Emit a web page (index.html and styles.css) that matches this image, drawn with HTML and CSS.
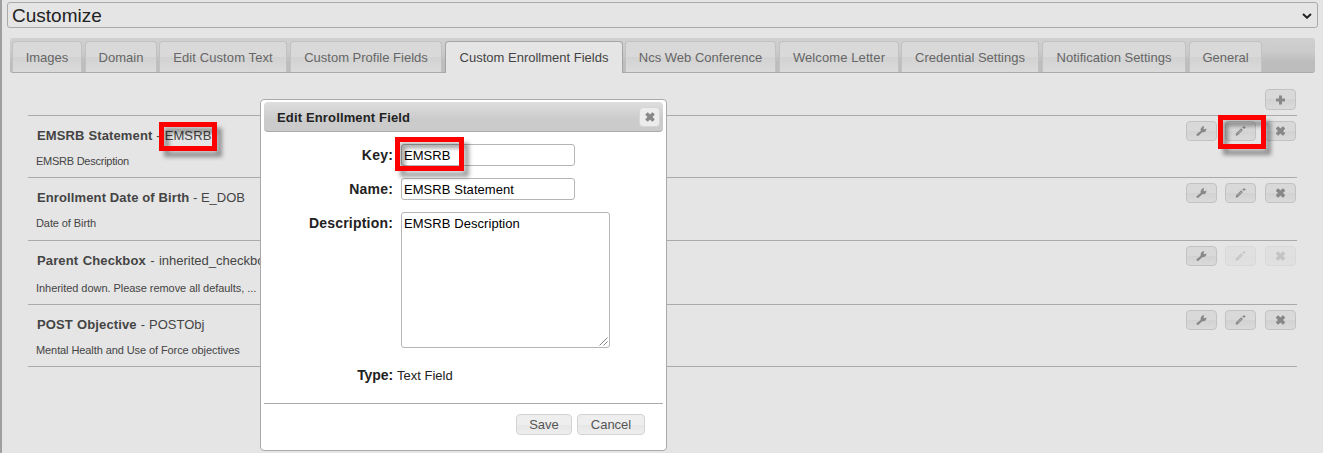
FILE: index.html
```html
<!DOCTYPE html>
<html lang="en">
<head>
<meta charset="utf-8">
<title>Customize</title>
<link rel="stylesheet" href="styles.css">
</head>
<body>
<svg class="defs" width="0" height="0" aria-hidden="true">
  <symbol id="plus" viewBox="0 0 10 10"><path d="M3.5 .5h3v3h3v3h-3v3h-3v-3h-3v-3h3z"/></symbol>
  <symbol id="cross" viewBox="0 0 10 10"><path d="M.5 2.2 2.3.5H3L5 2.6 7 .5h.8L9.5 2.2V3l-2 2 2 2v.8L7.8 9.5H7L5 7.4 3 9.5h-.7L.5 7.8V7l2-2-2-2z"/></symbol>
  <symbol id="wrench" viewBox="0 0 10 10"><path d="M0 8.2 4.1 5C3.8 2.5 5 .4 7.7.1L7 2.5l.8.8L10 2.4C10 5 8 6.5 5.7 6.3L2 9.7H.4L0 9.2z"/></symbol>
  <symbol id="pencil" viewBox="0 0 10 10"><path d="M.4 7.4 5.6 2.2l1.9 1.9-5.2 5.2-2 .4zM7 1h1V0h1v1h1v1H9v1H8V2H7z"/><path class="core" d="M2.3 7.5 6 3.8"/></symbol>
</svg>
<main class="page">
  <div class="select"><span>Customize</span><svg class="chevron" viewBox="0 0 10 6"><path d="M1 1l4 3.7L9 1"/></svg></div>
  <nav class="tabs">
    <div class="tab t1">Images</div><div class="tab t2">Domain</div><div class="tab t3">Edit Custom Text</div><div class="tab t4">Custom Profile Fields</div><div class="tab t5 active">Custom Enrollment Fields</div><div class="tab t6">Ncs Web Conference</div><div class="tab t7">Welcome Letter</div><div class="tab t8">Credential Settings</div><div class="tab t9">Notification Settings</div><div class="tab t10">General</div>
  </nav>
  <section class="fields">
    <div class="toolbar"><button class="btn"><svg><use href="#plus"/></svg></button></div>
    <article class="row r1"><div class="info"><h3><b>EMSRB Statement</b> - EMSRB</h3><p>EMSRB Description</p></div>
      <div class="actions"><button class="btn"><svg><use href="#wrench"/></svg></button><button class="btn"><svg><use href="#pencil"/></svg></button><button class="btn"><svg><use href="#cross"/></svg></button></div></article>
    <article class="row r2"><div class="info"><h3><b>Enrollment Date of Birth</b> - E_DOB</h3><p>Date of Birth</p></div>
      <div class="actions"><button class="btn"><svg><use href="#wrench"/></svg></button><button class="btn"><svg><use href="#pencil"/></svg></button><button class="btn"><svg><use href="#cross"/></svg></button></div></article>
    <article class="row r3"><div class="info"><h3><b>Parent Checkbox</b> - inherited_checkbox</h3><p>Inherited down. Please remove all defaults, ...</p></div>
      <div class="actions"><button class="btn"><svg><use href="#wrench"/></svg></button><button class="btn off"><svg><use href="#pencil"/></svg></button><button class="btn off"><svg><use href="#cross"/></svg></button></div></article>
    <article class="row r4"><div class="info"><h3><b>POST Objective</b> - POSTObj</h3><p>Mental Health and Use of Force objectives</p></div>
      <div class="actions"><button class="btn"><svg><use href="#wrench"/></svg></button><button class="btn"><svg><use href="#pencil"/></svg></button><button class="btn"><svg><use href="#cross"/></svg></button></div></article>
  </section>
</main>
<div class="dialog">
  <header class="titlebar"><span>Edit Enrollment Field</span><button class="close"><svg><use href="#cross"/></svg></button></header>
  <div class="form">
    <label>Key:</label><div class="input">EMSRB</div>
    <label>Name:</label><div class="input">EMSRB Statement</div>
    <label>Description:</label><div class="input area">EMSRB Description<svg class="grip" viewBox="0 0 9 9"><path d="M.5 8.5l8-8M4.5 8.5l4-4"/></svg></div>
    <label>Type:</label><div class="static">Text Field</div>
  </div>
  <footer class="buttons"><button class="text-btn save">Save</button><button class="text-btn cancel">Cancel</button></footer>
</div>
<div class="mark mark-name"></div>
<div class="mark mark-key"></div>
<div class="mark mark-edit"></div>
</body>
</html>
```
FILE: styles.css
```css
* { box-sizing: border-box; }
body { margin: 0; height: 453px; overflow: hidden; background: #e5e5e5; color: #444; font: 13px "Liberation Sans", Arial, sans-serif; }
.defs { position: absolute; }
button { font: inherit; padding: 0; }
.page { height: 453px; border-left: 2px solid #9f9f9f; padding: 2px 5px 0 5px; }
.select { height: 26px; border: 1px solid #aaa; border-radius: 3px; display: flex; align-items: center; justify-content: space-between; padding: 1px 5px 0 4px; font-size: 19px; color: #222; width: 1311px; }
.chevron { width: 10px; height: 6px; fill: none; stroke: #222; stroke-width: 2; }
.tabs { margin: 10px 0 0 3px; width: 1305px; height: 35px; padding: 3px 0 0 2px; display: flex; align-items: flex-start; border-bottom: 1px solid #aaa; border-radius: 3px; background: linear-gradient(#d0d0d0, #cbcbcb 40%, #bdbdbd 70%, #bdbdbd); white-space: nowrap; }
.tab { flex: none; height: 31px; margin-right: 2px; border: 1px solid #c2c2c2; border-bottom: 0; border-radius: 4px 4px 0 0; background: linear-gradient(#d9d9d9 50%, #d2d2d2 50%, #dadada); color: #666; text-align: center; line-height: 31px; }
.tab.active { height: 32px; background: #e5e5e5; border-color: #a5a5a5; color: #444; }
.t1 { width: 70px; margin-right: 3px; } .t2 { width: 72px; } .t3 { width: 128px; margin-right: 3px; } .t4 { width: 152px; margin-right: 3px; } .t5 { width: 178px; } .t6 { width: 151px; margin-right: 3px; } .t7 { width: 120px; } .t8 { width: 138px; margin-right: 3px; } .t9 { width: 144px; margin-right: 3px; } .t10 { width: 73px; }
.t3, .t7 { letter-spacing: .1px; }
.fields { margin: 16px 0 0 21px; width: 1269px; }
.toolbar { height: 26px; display: flex; justify-content: flex-end; padding-right: 1px; }
.btn { width: 31px; height: 21px; border: 1px solid #c2c2c2; border-radius: 4px; background: linear-gradient(#d9d9d9 50%, #d2d2d2 50%, #dadada); display: flex; align-items: center; justify-content: center; fill: #888; }
.btn svg { width: 11px; height: 10px; display: block; flex: none; }
.close svg { width: 10px; height: 10px; display: block; flex: none; }
.core { fill: none; stroke: #bbb; stroke-width: .8; }
.off { opacity: .35; }
.row { border-top: 1px solid #aaa; display: flex; justify-content: space-between; }
.r1 { height: 62px; } .r2 { height: 63px; } .r3 { height: 64px; } .r4 { height: 63px; border-bottom: 1px solid #aaa; }
.info { padding: 12px 0 0 9px; }
.info h3 { margin: 0; font-size: 13px; font-weight: 400; line-height: 16px; white-space: nowrap; }
.info h3 b { letter-spacing: .12px; }
.r1 .info h3 { word-spacing: .2px; letter-spacing: .1px; }
.r3 .info h3 { word-spacing: .8px; }
.r4 .info h3 { word-spacing: .4px; }
.info p { margin: 10px 0 0 -1px; font-size: 11px; line-height: 14px; letter-spacing: -.09px; }
.r1 .info p { letter-spacing: -.25px; }
.r3 .info p { margin-top: 12px; letter-spacing: -.05px; }
.actions { display: flex; padding: 5px 1px 0 0; }
.actions .btn { height: 20px; margin-left: 9px; }
.actions .btn + .btn { margin-left: 8px; } .actions .btn:last-child { margin-left: 9px; }
.dialog { position: absolute; left: 260px; top: 99px; width: 407px; height: 352px; background: #fff; border: 1px solid #aaa; border-radius: 4px; padding: 2px 3px; color: #222; }
.titlebar { height: 30px; border-bottom: 1px solid #aaa; border-radius: 4px; background: linear-gradient(#dedede, #cbcbcb 60%, #cbcbcb); display: flex; align-items: center; justify-content: space-between; padding: 1px 3px 0 13px; font-weight: 700; letter-spacing: .15px; }
.close { width: 21px; height: 20px; border: 1px solid #d5d5d5; border-radius: 4px; background: #ececec; display: flex; align-items: center; justify-content: center; fill: #888; }
.form { display: grid; grid-template-columns: 129px 209px; grid-template-rows: 22px 22px 136px 20px; row-gap: 12px; column-gap: 8px; padding-top: 12px; height: 272px; border-bottom: 1px solid #aaa; }
.form label { text-align: right; font-weight: 700; line-height: 22px; font-size: 14px; white-space: nowrap; letter-spacing: .2px; }
.input { width: 174px; border: 1px solid #b5b5b5; border-radius: 3px; padding-left: 2px; color: #000; line-height: 21px; letter-spacing: .06px; }
.input.area { width: 209px; position: relative; }
.grip { position: absolute; right: 1px; bottom: 1px; width: 9px; height: 9px; fill: none; stroke: #666; stroke-width: .8; }
.form label:nth-of-type(4) { padding-top: 4px; letter-spacing: -.1px; }
.static { margin-left: -4px; padding-top: 5px; line-height: 22px; }
.buttons { display: flex; justify-content: flex-end; gap: 5px; padding: 10px 18px 0 0; }
.text-btn { height: 21px; border: 1px solid #d3d3d3; border-radius: 4px; background: linear-gradient(#eee 50%, #e6e6e6 50%, #eee); color: #555; }
.save { width: 56px; } .cancel { width: 68px; }
.mark { position: absolute; border: 5px solid red; filter: drop-shadow(5px 6px 2px rgba(0,0,0,.38)); }
.mark-name { left: 159px; top: 122px; width: 58px; height: 29px; }
.mark-key { left: 395px; top: 137px; width: 69px; height: 34px; }
.mark-edit { left: 1218px; top: 115px; width: 48px; height: 34px; }
```
